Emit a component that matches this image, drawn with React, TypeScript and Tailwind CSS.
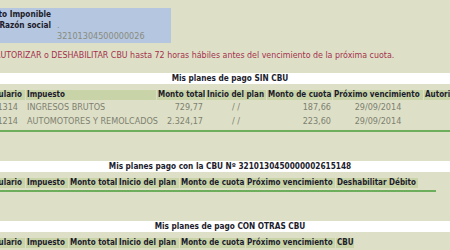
import React from 'react';

type Plan = {
  form: string;
  tax: string;
  total: string;
  start: string;
  fee: string;
  due: string;
};

const planesSinCbu: Plan[] = [
  { form: '1314', tax: 'INGRESOS BRUTOS', total: '729,77', start: '/ /', fee: '187,66', due: '29/09/2014' },
  { form: '1214', tax: 'AUTOMOTORES Y REMOLCADOS', total: '2.324,17', start: '/ /', fee: '223,60', due: '29/09/2014' },
];

const baseHeaders = ['Formulario', 'Impuesto', 'Monto total', 'Inicio del plan', 'Monto de cuota', 'Próximo vencimiento'];

// celda de encabezado
function Th({ children }: { children: React.ReactNode }) {
  return (
    <div className="h-[10px] whitespace-nowrap bg-[#c9d3a8] px-[1px] text-[8px] font-bold leading-[10px] text-[#1c1c2c]">
      {children}
    </div>
  );
}

function TitleBar({ children }: { children: React.ReactNode }) {
  return (
    <div className="h-[11px] w-[460px] bg-white text-center text-[8.2px] font-bold leading-[11px] text-[#1c1c2c]">
      {children}
    </div>
  );
}

export default function App() {
  return (
    <div className="h-[250px] w-[450px] overflow-hidden bg-[#dde0c7] font-['DejaVu_Sans_Condensed','DejaVu_Sans',sans-serif] font-stretch-condensed">
      {/* datos del contribuyente */}
      <div className="pt-[8px]">
        <div className="-ml-[22px] h-[35px] w-[193px] bg-[#b4c6e0] pt-[1px]">
          <div className="flex h-[11px] leading-[11px]">
            <div className="w-[73px] whitespace-nowrap text-right text-[8.2px] font-bold text-[#1c1c2c]">Sujeto Imponible</div>
            <div className="pl-[6px] text-[9px] text-[#8a8b7c]"></div>
          </div>
          <div className="flex h-[11px] leading-[11px]">
            <div className="w-[73px] whitespace-nowrap text-right text-[8.2px] font-bold text-[#1c1c2c]">Razón social</div>
            <div className="pl-[6px] text-[9px] text-[#8a8b7c]">.</div>
          </div>
          <div className="flex h-[11px] leading-[11px]">
            <div className="w-[73px]" />
            <div className="pl-[6px] text-[9px] text-[#8a8b7c]">32101304500000026</div>
          </div>
        </div>
      </div>

      <p className="-ml-[5px] mt-[7px] whitespace-nowrap text-[8.8px] leading-[11px] text-[#a5304d]">
        AUTORIZAR o DESHABILITAR CBU hasta 72 horas hábiles antes del vencimiento de la próxima cuota.
      </p>

      {/* planes sin CBU */}
      <div className="mt-[12px]">
        <TitleBar>Mis planes de pago SIN CBU</TitleBar>
        <div className="-ml-[23px] mt-[6px] grid w-max grid-cols-[48px_130px_48px_60px_65px_90px_70px] gap-x-[1px]">
          {[...baseHeaders, 'Autorizar Débito'].map((h) => (
            <Th key={h}>{h}</Th>
          ))}
          {planesSinCbu.map((p) => (
            <React.Fragment key={p.form}>
              <div className="h-[14px] pr-[7px] text-right text-[9px] leading-[14px] text-[#7e7f70]">{p.form}</div>
              <div className="h-[14px] whitespace-nowrap pl-[1px] text-[9px] leading-[14px] text-[#7e7f70]">{p.tax}</div>
              <div className="h-[14px] pr-[2px] text-right text-[9px] leading-[14px] text-[#7e7f70]">{p.total}</div>
              <div className="h-[14px] text-center text-[9px] leading-[14px] text-[#7e7f70]">{p.start}</div>
              <div className="h-[14px] pr-[1px] text-right text-[9px] leading-[14px] text-[#7e7f70]">{p.fee}</div>
              <div className="h-[14px] text-center text-[9px] leading-[14px] text-[#7e7f70]">{p.due}</div>
              <div className="h-[14px]" />
            </React.Fragment>
          ))}
        </div>
        <div className="mt-[2px] h-[2px] w-[460px] bg-[#6cae5c]" />
      </div>

      {/* planes con la CBU */}
      <div className="mt-[29px]">
        <TitleBar>Mis planes pago con la CBU Nº 3210130450000002615148</TitleBar>
        <div className="-ml-[23px] mt-[6px] grid w-max grid-cols-[48px_42px_48px_61px_65px_89px_82px] gap-x-[1px]">
          {[...baseHeaders, 'Deshabilitar Débito'].map((h) => (
            <Th key={h}>{h}</Th>
          ))}
        </div>
        <div className="mt-[2px] h-[2px] w-[436px] bg-[#6cae5c]" />
      </div>

      {/* planes con otras CBU */}
      <div className="mt-[29px]">
        <TitleBar>Mis planes de pago CON OTRAS CBU</TitleBar>
        <div className="-ml-[23px] mt-[6px] grid w-max grid-cols-[48px_42px_48px_61px_65px_89px_18px] gap-x-[1px]">
          {[...baseHeaders, 'CBU'].map((h) => (
            <Th key={h}>{h}</Th>
          ))}
        </div>
        <div className="mt-[2px] h-[2px] w-[436px] bg-[#6cae5c]" />
      </div>
    </div>
  );
}
